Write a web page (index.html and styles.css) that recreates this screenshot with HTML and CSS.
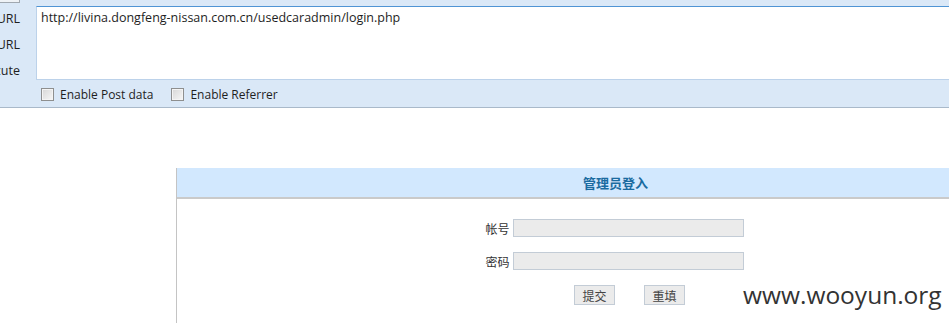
FILE: index.html
```html
<!doctype html>
<html lang="zh-CN">
  <head>
    <meta charset="UTF-8" />
    <title>管理员登入</title>
    <link rel="stylesheet" href="styles.css">
  </head>

  <body>
    <div class="hackbar">
      <div class="toolbar">
        <span class="tool-btn"></span>
      </div>
      <div class="fields">
        <div class="labels">
          <span>Load URL</span>
          <span>Split URL</span>
          <span>Execute</span>
        </div>
        <textarea class="url-box" readonly>http://livina.dongfeng-nissan.com.cn/usedcaradmin/login.php</textarea>
      </div>
      <div class="options">
        <label class="option"><span class="check"></span>Enable Post data</label>
        <label class="option"><span class="check"></span>Enable Referrer</label>
      </div>
    </div>

    <div class="login">
      <div class="login-title">管理员登入</div>
      <form class="login-body">
        <div class="row">
          <label for="user">帐号</label>
          <input type="text" id="user" name="username" />
        </div>
        <div class="row">
          <label for="pass">密码</label>
          <input type="password" id="pass" name="password" />
        </div>
        <div class="row buttons">
          <button type="submit" class="btn">提交</button>
          <button type="reset" class="btn">重填</button>
        </div>
      </form>
    </div>

    <div class="watermark">www.wooyun.org</div>
  </body>
</html>
```

FILE: styles.css
```css
* {
  margin: 0;
  padding: 0;
  box-sizing: border-box;
}

html,
body {
  width: 949px;
  height: 323px;
  overflow: hidden;
}

body {
  position: relative;
  background-color: #ffffff;
  font-family: 'Open Sans', 'Noto Sans CJK SC', sans-serif;
  font-size: 12.5px;
  color: #1e1e1e;
}

/* hackbar strip on top */
.hackbar {
  height: 108px;
  background-color: #dae8f7;
  border-bottom: 1px solid #a9b9ca;
}

.toolbar {
  height: 3px;
}

.tool-btn {
  display: block;
  width: 20px;
  height: 3px;
  background-color: #eef2f6;
  border-right: 1px solid #a0a8b0;
  border-bottom: 1px solid #a0a8b0;
}

.fields {
  display: flex;
  gap: 16px;
  height: 74px;
  margin-top: 3px;
}

.labels {
  width: 20px;
  display: flex;
  flex-direction: column;
  align-items: flex-end;
}

.labels span {
  flex: none;
  height: 26px;
  line-height: 25px;
  white-space: nowrap;
  color: #1e1e1e;
}

.url-box {
  flex: 1;
  height: 74px;
  border: 1px solid #bcd2ea;
  border-top-color: #4f94d4;
  border-right: none;
  background-color: #ffffff;
  padding: 2px 4px;
  font-family: 'Open Sans', sans-serif;
  font-size: 12.5px;
  line-height: 17px;
  color: #1e1e1e;
  resize: none;
  outline: none;
}

.options {
  display: flex;
  align-items: center;
  gap: 18px;
  height: 28px;
  padding-left: 41px;
  font-size: 12px;
}

.option {
  display: flex;
  align-items: center;
  gap: 6px;
  color: #1e1e1e;
}

.check {
  width: 13px;
  height: 13px;
  border: 1px solid #8e8f8f;
  background: linear-gradient(135deg, #d6d6d6, #f7f7f7);
  box-shadow: inset 0 0 0 1px #f4f4f4;
}

/* login box */
.login {
  width: 878px;
  height: 155px;
  margin: 60px 0 0 176px;
  border-left: 1px solid #c4c4c4;
}

.login-title {
  height: 31px;
  line-height: 30px;
  background-color: #d2e8fe;
  border-bottom: 2px solid #cacaca;
  text-align: center;
  font-family: 'Noto Sans CJK SC', sans-serif;
  font-size: 13px;
  font-weight: 700;
  color: #1a6ba0;
}

.login-body {
  padding-top: 20px;
  display: flex;
  flex-direction: column;
  gap: 15px;
}

.row {
  display: flex;
  justify-content: center;
  align-items: center;
  gap: 3px;
  padding-right: 2px;
}

.row label {
  font-family: 'Noto Sans CJK SC', sans-serif;
  font-size: 12px;
  color: #333333;
}

.row input {
  width: 231px;
  height: 18px;
  border: 1px solid #c3ccd6;
  background-color: #ebebeb;
  outline: none;
}

.buttons {
  gap: 29px;
  padding-left: 30px;
}

.btn {
  width: 41px;
  height: 20px;
  border: 1px solid #c3ccd6;
  background-color: #ebebeb;
  font-family: 'Noto Sans CJK SC', sans-serif;
  font-size: 12px;
  color: #444444;
  cursor: pointer;
}

.watermark {
  position: absolute;
  left: 743px;
  top: 278px;
  font-family: 'Open Sans', sans-serif;
  font-size: 24.5px;
  color: #333333;
}
```
